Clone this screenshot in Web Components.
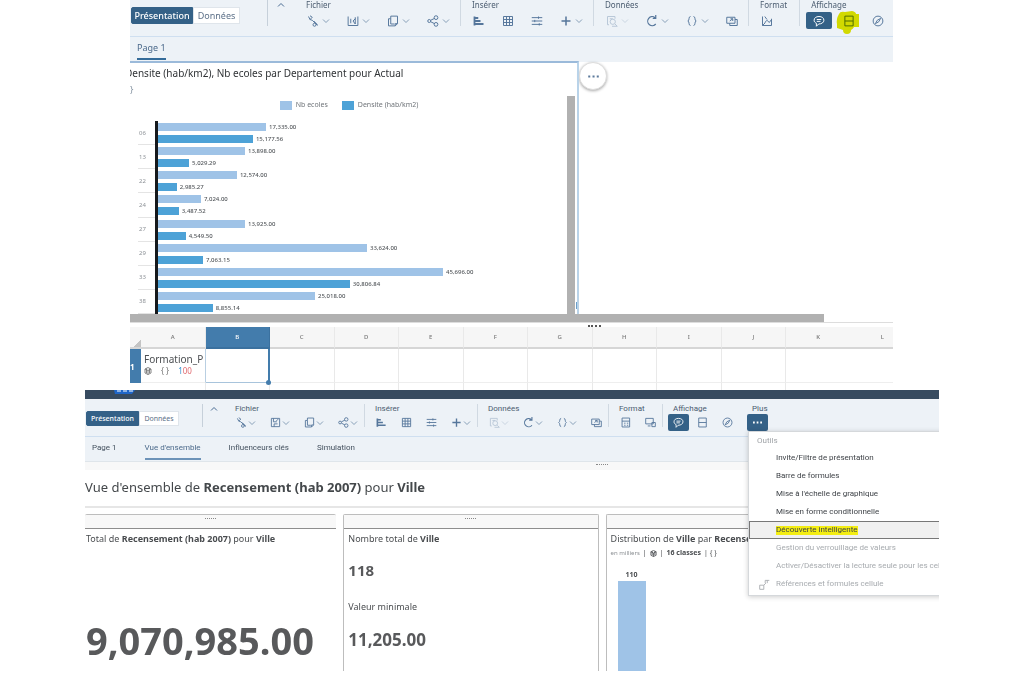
<!DOCTYPE html>
<html lang="fr">
<head>
<meta charset="utf-8">
<title>Vue d'ensemble</title>
<style>
  body { margin: 0; background: #fff; font-family: "Noto Sans", "Open Sans", sans-serif; color: #4a4d50; }
  main { display: block; }
</style>
</head>
<body>
<main>
  <sheet-view></sheet-view>
  <discovery-view></discovery-view>
</main>
<script>
const define = (name, render) => {
  customElements.define(name, class extends HTMLElement {
    connectedCallback() {
      if (this.shadowRoot) return;
      this.attachShadow({ mode: "open" }).innerHTML = render(this);
    }
  });
};

/* Icon set, drawn on a 16 x 16 grid */
const ICONS = {
  wrench: '<path d="M2 2l2 4 3 1 7 7M4 6l3-3-3-2M8 13a2 2 0 1 0 4 0 2 2 0 1 0-4 0M9 8l5 5"/>',
  save: '<path d="M1.500 2v12h13V2M5 5v6M8 8l3-3M8 8l3 4M11 3v9"/>',
  saveas: '<path d="M2 2h12v12H2zM5 2v5h5M9 6l3-3M6 14v-4h5"/>',
  copy: '<path d="M5 1.500h9v10l-3 3H2V5h3zM5 5v7h5M14 11.500h-3v3"/>',
  share: '<circle cx="3" cy="8" r="2"/><circle cx="12" cy="3.500" r="2.500"/><circle cx="12" cy="12.500" r="2.500"/><path d="M5 7l5-2.500M5 9l5 2.500"/>',
  chart: '<path d="M2 2v12M2 4h5M2 8h8M2 12h12" stroke-width="2.400"/>',
  table: '<path d="M2 2h12v12H2zM2 6h12M2 10h12M6 2v12M10 2v12"/>',
  sliders: '<path d="M1 3.500h14M1 8h14M1 12.500h14M10 2v3M5 6.500v3M11 11v3"/>',
  plus: '<path d="M8 2v12M2 8h12" stroke-width="2"/>',
  find: '<path d="M4 13H2V2h10v3M5 5h4"/><circle cx="9" cy="9" r="3.500"/><path d="M12 12l3 3H8"/>',
  refresh: '<path d="M13 12A6 6 0 1 1 12 3.500M13 0v4.500H9" stroke-width="1.600"/>',
  braces: '<path d="M6 2C3 2 5 7 2.500 8 5 9 3 14 6 14M10 2c3 0 1 5 3.500 6C11 9 13 14 10 14"/>',
  layers: '<path d="M1 3h11v8H1zM12 6h3v8H5v-3M5 8l4-3M9 8V5H6"/>',
  format: '<path d="M2 2v12h12V5M5 10l3-3 3 3 3-4M5 2l3 4M2 14l4-4"/>',
  calc: '<path d="M3 1.500h11v13H3zM3 6h11M6 9h2M10 9h2M6 12h2M10 12h2"/>',
  device: '<path d="M1 2h11v8H1zM4 13h4M10 8h5v6h-5z"/>',
  comment: '<path d="M8 2C4 2 1.500 4 1.500 7c0 2 1 3 3 4v4l3-3c4 0 7-2 7-5S12 2 8 2zM5 6h6M5 8.500h5"/>',
  rows: '<path d="M2.500 1.500h11v13h-11zM2.500 8h11"/>',
  compass: '<circle cx="8" cy="8" r="6.500"/><path d="M11.500 4.500L9 9l-4.500 2.500L7 7z"/>',
  dots: '<path d="M1.500 8h2.500M6.800 8h2.500M12 8h2.500" stroke-width="2.600"/>',
  down: '<path d="M2 5l6 6 6-6" stroke-width="1.800"/>',
  up: '<path d="M2 11l6-6 6 6" stroke-width="2"/>',
  cube: '<path d="M8 1l6 3v8l-6 3-6-3V4zM2 4l6 3 6-3M8 7v8M5 3v9M11 3v9" stroke-width="1.800"/>',
  link: '<path d="M1 9h6v6H1zM7 9l3-3M9 6V2h6M12 2v4"/>'
};
define("ui-icon", el => `
  <style>
    :host { display: block; flex: none; width: var(--icon, 11px); height: var(--icon, 11px); }
    svg { display: block; width: 100%; height: 100%; fill: none; stroke: currentColor; stroke-width: 1.300; }
  </style>
  <svg viewBox="0 0 16 16" aria-hidden="true">${ICONS[el.getAttribute("name")]}</svg>`);

define("tool-button", el => `
  <style>
    :host { display: flex; flex: none; }
    :host([dim]) { opacity: .35; }
    button { display: flex; align-items: center; gap: var(--chev-gap, 3px); border: 0; padding: 0 1px; background: none; color: #55769b; height: 17px; }
    ui-icon.down { --icon: 8px; color: #7d96b0; }
    :host([active]) button { background: #346187; color: #fff; border-radius: 2px; padding: 0 var(--active-pad, 7px); }
    :host([active]) { margin: 0 -5px; }
    :host([marked]) { position: relative; }
    svg { position: absolute; left: -6px; top: -1px; width: 26px; height: 24px; mix-blend-mode: multiply; }
  </style>
  <button type="button" aria-label="${el.getAttribute("label") || el.getAttribute("icon")}">
    <ui-icon name="${el.getAttribute("icon")}"></ui-icon>
    ${el.hasAttribute("menu") ? '<ui-icon class="down" name="down"></ui-icon>' : ""}
  </button>
  ${el.hasAttribute("marked") ? '<svg viewBox="0 0 26 24" aria-hidden="true"><path d="M3 3Q4 0 9 1l7-1q4 1 4 3h3v13h-5q-1 2-3 3 0 4-4 4t-4-4L1 17V13Q0 8 3 3z" fill="#e2e500"/></svg>' : ""}`);

define("tool-group", el => `
  <style>
    :host { display: flex; flex-direction: column; flex: none; position: relative; box-sizing: border-box;
            padding: 0 var(--g-right, 9px) 0 var(--g-left, 11px); border-left: 1px solid #d0d9e2; height: var(--g-h, 26px); }
    :host([plain]) { border-left-color: transparent; }
    .label { font-family: var(--label-face, inherit); font-size: 8px; line-height: 10px; color: #4b5c70; white-space: nowrap; }
    .items { display: flex; align-items: center; gap: var(--tool-gap, 15px); height: 17px; margin-top: var(--items-top, 2px); }
  </style>
  <span class="label">${el.getAttribute("label")}</span>
  <div class="items"><slot></slot></div>
  <slot name="menu"></slot>`);

define("mode-switch", () => `
  <style>
    :host { display: flex; flex: none; }
    button { font: inherit; font-size: var(--mode-font, 9px); border: 1px solid #dfe5eb; background: #fff; color: #5c7088; padding: 0; height: var(--mode-h, 17px); width: var(--mode-b, 47px); white-space: nowrap; display: flex; align-items: center; justify-content: center; }
    button[aria-pressed=true] { background: #346187; border-color: #346187; color: #fff; width: var(--mode-a, 62px); border-radius: 2px 0 0 2px; font-weight: 500; }
  </style>
  <button type="button" aria-pressed="true">Présentation</button>
  <button type="button" aria-pressed="false">Données</button>`);

define("tool-bar", () => `
  <style>
    :host { display: flex; align-items: flex-start; box-sizing: border-box; background: #edf2f7; border-bottom: 1px solid #cfdff0; }
    .mode { padding: var(--mode-top, 7px) var(--mode-gap, 27px) 0 1px; }
    .fold { border-left: 1px solid #c6d0da; width: var(--fold-w, 27px); height: var(--g-h, 26px); display: flex; justify-content: center; flex: none; box-sizing: border-box; }
    .fold button { border: 0; padding: 0; background: none; color: #4a6c93; height: 10px; --icon: 8px; }
  </style>
  <div class="mode"><mode-switch></mode-switch></div>
  <div class="fold"><button type="button" aria-label="Réduire"><ui-icon name="up"></ui-icon></button></div>
  <slot></slot>`);

define("tab-strip", el => {
  const current = +el.getAttribute("current");
  return `
  <style>
    :host { display: flex; box-sizing: border-box; background: #edf2f7; gap: 28px; padding-left: var(--tab-left, 7px); }
    a { font-family: var(--label-face, inherit); font-size: var(--tab-font, 8px); color: #44515f; text-decoration: none; line-height: 21px; height: 21px; white-space: nowrap; }
    a[aria-current] { color: #4c6a8b; border-bottom: 2px solid var(--tab-line, #6d93b8); }
  </style>
  ${el.getAttribute("tabs").split("|").map((t, i) => `<a href="#tab${i}" ${i === current ? 'aria-current="page"' : ""}>${t}</a>`).join("")}`;
});

define("bar-chart", () => {
  const unit = 409;
  const data = [
    ["06", 108, "17,335.00", 95, "15,177.56"], ["13", 87, "13,898.00", 31, "5,029.29"],
    ["22", 79, "12,574.00", 19, "2,985.27"], ["24", 43, "7,024.00", 21, "3,487.52"],
    ["27", 87, "13,925.00", 28, "4,549.50"], ["29", 209, "33,624.00", 45, "7,063.15"],
    ["33", 285, "45,696.00", 192, "30,806.84"], ["38", 157, "25,018.00", 55, "8,855.14"]];
  const bar = (cls, w, v) => `<div class="bar"><i class="${cls}" style="width:${(w / unit * 100).toFixed(1)}%"></i><span>${v}</span></div>`;
  return `
  <style>
    :host { display: flex; flex-direction: column; position: relative; box-sizing: border-box; overflow: hidden;
            border-top: 2px solid #9bbada; border-right: 2px solid #b9d3e9; height: 253px; }
    header { white-space: nowrap; line-height: 17px; padding-top: 2px; }
    header h2 { margin: 0 0 0 -5px; font: inherit; font-size: 10px; color: #303336; }
    header p { margin: 0; font-size: 9px; line-height: 15px; color: #8795a3; }
    .legend { display: flex; justify-content: center; gap: 14px; font-size: 7px; line-height: 14px; color: #70757a; padding-right: 9px; margin-top: 1px; }
    .legend span { display: flex; align-items: center; gap: 4px; }
    .legend i { width: 12px; height: 9px; }
    .light { background: #9fc3e7; } .dark { background: #4da2d7; }
    .plot { flex: 1; margin-top: 9px; display: grid; grid-auto-rows: 1fr; padding-right: 10px; }
    .row { display: grid; grid-template-columns: 8px 17px 1fr; }
    .cat { grid-column: 2; display: flex; align-items: center; justify-content: center; padding-right: 8px; font-size: 6px; color: #8d9297; border-bottom: 1px solid #e4e4e4; }
    .bars { border-left: 3px solid #16191c; display: flex; flex-direction: column; justify-content: space-around; }
    .bar { display: flex; align-items: center; height: 8px; }
    .bar i { height: 8px; flex: none; }
    .bar span { font-size: 6px; line-height: 8px; font-weight: 500; color: #54585c; padding-left: 3px; }
    .scroll { position: absolute; right: 2px; top: 33px; bottom: 0; width: 8px; background: #b1b1b1; }
    .thumb { position: absolute; right: -2px; bottom: 5px; width: 3px; height: 7px; background: #6c9fca; }
  </style>
  <header><h2>Densite (hab/km2), Nb ecoles par Departement pour Actual</h2><p>}</p></header>
  <div class="legend"><span><i class="light"></i>Nb ecoles</span><span><i class="dark"></i>Densite (hab/km2)</span></div>
  <div class="plot">${data.map(d => `<div class="row"><div class="cat">${d[0]}</div><div class="bars">${bar("light", d[1], d[2])}${bar("dark", d[3], d[4])}</div></div>`).join("")}</div>
  <div class="scroll"></div><div class="thumb"></div>`;
});

define("data-grid", () => {
  const cols = [..."ABCDEFGHIJKL"];
  return `
  <style>
    :host { display: block; overflow: hidden; height: 63px; }
    table { border-collapse: separate; border-spacing: 0; table-layout: fixed; width: calc(100% + 22px); }
    .rowhead { width: 11px; }
    th, td { padding: 0; box-sizing: border-box; border-right: 1px solid #e9e9e9; overflow: hidden; }
    thead th { height: 22px; background: #f6f6f6; font-size: 6px; font-weight: 500; color: #777; border-bottom: 2px solid #d6d6d6; }
    thead th.corner { background: linear-gradient(135deg, #f6f6f6 75%, #c4c4c4 75%); border-right: 0; }
    thead th.sel { background: #437cac; color: #fff; border-color: #3b719f; }
    thead th:nth-child(12), td:nth-child(12) { border-right: 0; }
    tbody th { background: #437cac; color: #fff; font-size: 8px; text-align: left; border: 0; }
    td { border-bottom: 1px solid #eee; vertical-align: top; height: 34px; }
    td.a { border-right-color: #b9cfe2; padding: 4px 0 0 3px; white-space: nowrap; font-size: 10px; line-height: 12px; color: #4c4f52; }
    td.sel { border-right: 2px solid #437cac; border-bottom-color: #a8c4dc; position: relative; overflow: visible; }
    td.sel::after { content: ""; position: absolute; right: -3px; bottom: -3px; width: 5px; height: 5px; border-radius: 50%; background: #437cac; }
    .meta { display: flex; align-items: center; gap: 9px; --icon: 8px; font-size: 8px; color: #777; }
    b { font-weight: 400; color: #3a93d0; } em { font-style: normal; color: #e06a70; }
    tr.next td, tr.next th { height: 8px; background: #fff; border-bottom: 0; }
  </style>
  <table>
    <thead><tr><th class="rowhead corner"></th>${cols.map(c => `<th scope="col" class="${c === "B" ? "sel" : ""}">${c}</th>`).join("")}</tr></thead>
    <tbody>
      <tr><th scope="row">1</th>${cols.map(c => c === "A"
        ? '<td class="a">Formation_P<div class="meta"><ui-icon name="cube"></ui-icon><span>{ }</span><span><b>1</b><em>00</em></span></div></td>'
        : `<td class="${c === "B" ? "sel" : ""}"></td>`).join("")}</tr>
      <tr class="next"><th></th>${cols.map(() => "<td></td>").join("")}</tr>
    </tbody>
  </table>`;
});

define("sheet-view", () => `
  <style>
    :host { display: block; margin: 0 131px 0 130px; }
    tool-bar { height: 37px; overflow: hidden; --icon: 12px; }
    .wide { --g-right: 12px; }
    tab-strip { height: 25px; --tab-font: 9px; --tab-line: #346b99; }
    .canvas { display: grid; grid-template-columns: 449px 1fr; margin-top: -1px; }
    .more { width: 28px; height: 28px; margin: 1px 0 0; padding: 0; border: 1px solid #ddd; border-radius: 50%; background: #fff; color: #5c7a9c; box-shadow: 0 1px 3px #0005; display: flex; align-items: center; justify-content: center; --icon: 13px; }
    .hscroll { height: 8px; width: 91%; background: #b1b1b1; }
    .split { border-top: 1px solid #ddd; height: 4px; display: flex; justify-content: center; padding-left: 166px; }
    .split::before { content: ""; width: 13px; border-top: 2px dotted #555; margin-top: 2px; }
  </style>
  <tool-bar>
    <tool-group label="Fichier" plain>
      <tool-button icon="wrench" menu></tool-button><tool-button icon="save" menu></tool-button>
      <tool-button icon="copy" menu></tool-button><tool-button icon="share" menu></tool-button>
    </tool-group>
    <tool-group label="Insérer">
      <tool-button icon="chart"></tool-button><tool-button icon="table"></tool-button>
      <tool-button icon="sliders"></tool-button><tool-button icon="plus" menu></tool-button>
    </tool-group>
    <tool-group label="Données">
      <tool-button icon="find" menu dim></tool-button><tool-button icon="refresh" menu></tool-button>
      <tool-button icon="braces" menu></tool-button><tool-button icon="layers"></tool-button>
    </tool-group>
    <tool-group label="Format" class="wide"><tool-button icon="format"></tool-button></tool-group>
    <tool-group label="Affichage">
      <tool-button icon="comment" active></tool-button><tool-button icon="rows" marked></tool-button><tool-button icon="compass"></tool-button>
    </tool-group>
  </tool-bar>
  <tab-strip tabs="Page 1" current="0"></tab-strip>
  <div class="canvas"><bar-chart></bar-chart><button class="more" type="button" aria-label="Plus d'actions"><ui-icon name="dots"></ui-icon></button></div>
  <div class="hscroll"></div>
  <div class="split"></div>
  <data-grid></data-grid>`);

define("tools-menu", () => `
  <style>
    :host { display: block; position: absolute; top: 27px; left: 8px; width: 216px; box-sizing: border-box; background: #fff;
            border: 1px solid #d5d8db; box-shadow: 0 1px 5px #0003; padding-bottom: 2px; font-family: Roboto, sans-serif; }
    h3 { margin: 0; padding-left: 8px; font-size: 8px; font-weight: 400; line-height: 17px; color: #a0a4a8; }
    ul { list-style: none; margin: 0; padding: 0; }
    button { font: inherit; font-size: 8px; line-height: 16px; width: 100%; box-sizing: border-box; display: flex; align-items: center; border: 1px solid transparent; background: none; padding: 0 0 0 9px; color: #3f4348; white-space: nowrap; text-align: left; --icon: 11px; }
    button::before { content: ""; width: 17px; flex: none; }
    button.icon::before { content: none; }
    button.icon ui-icon { margin-right: 6px; }
    button:disabled { color: #a7abaf; }
    button.on { background: #f0f0f0; border: 1px solid #777; }
    mark { background: linear-gradient(#f4ee12, #f4ee12) 0 4px / 100% 9px no-repeat; color: inherit; }
  </style>
  <h3>Outils</h3>
  <ul>
    <li><button type="button">Invite/Filtre de présentation</button></li>
    <li><button type="button">Barre de formules</button></li>
    <li><button type="button">Mise à l'échelle de graphique</button></li>
    <li><button type="button">Mise en forme conditionnelle</button></li>
    <li><button type="button" class="on"><mark>Découverte intelligente</mark></button></li>
    <li><button type="button" disabled>Gestion du verrouillage de valeurs</button></li>
    <li><button type="button" disabled>Activer/Désactiver la lecture seule pour les cell</button></li>
    <li><button type="button" class="icon" disabled><ui-icon name="link"></ui-icon>Références et formules cellule</button></li>
  </ul>`);

define("tile-card", () => `
  <style>
    :host { display: block; box-sizing: border-box; height: 157px; border: solid #bdbdbd; border-width: 1px 1px 0; border-radius: 2px 2px 0 0; overflow: hidden; min-width: 0; }
    :host([flush]) { border-left: 0; border-right: 0; }
    :host([open]) { border-right: 0; }
    .grip { height: 13px; background: #f8f8f8; border-bottom: 1px solid #8e8e8e; display: flex; justify-content: center; }
    .grip::before { content: ""; width: 11px; border-top: 1px dotted #888; margin-top: 3px; }
    .body { padding: 3px 0 0 4px; }
    :host([flush]) .body { padding-left: 1px; }
  </style>
  <div class="grip"></div><div class="body"><slot></slot></div>`);

define("discovery-view", () => `
  <style>
    :host { display: block; margin: 0 85px; overflow: hidden; --g-h: 23px; --g-left: 10px; --g-right: 5px; --tool-gap: 12px; --chev-gap: 1px; --active-pad: 5px;
      --mode-font: 7px; --mode-h: 15px; --mode-a: 53px; --mode-b: 40px; --mode-gap: 23px; --mode-top: 7px; --fold-w: 22px; --items-top: 0px; --label-face: Roboto, sans-serif; }
    .shell { height: 9px; background: #374b60; display: flex; padding-left: 29px; }
    .shell svg { display: block; width: 24px; height: 4px; }
    tool-bar { height: 38px; padding-top: 5px; position: relative; z-index: 2; --icon: 11px; }
    .extra { --g-left: 12px; }
    tab-strip { height: 25px; --tab-font: 8px; border-bottom: 1px solid #dfe5ea; }
    .grip { height: 8px; background: #f8f8f8; display: flex; justify-content: center; padding-left: 180px; }
    .grip::before { content: ""; width: 12px; border-top: 1px dotted #888; margin-top: 2px; }
    h1 { margin: 0; font-size: 13px; line-height: 20px; font-weight: 400; padding: 7px 0 9px; border-bottom: 2px solid #e6e6e6; white-space: nowrap; color: #44484b; }
    .tiles { display: grid; grid-template-columns: 251fr 255fr 333fr; gap: 7px; margin-top: 6px; }
    p { margin: 0; font-size: 9px; line-height: 14px; white-space: nowrap; }
    strong.big { display: block; font-size: 38px; line-height: 50px; margin-top: 69px; color: #58595b; }
    strong.n { display: block; font-size: 15px; line-height: 24px; color: #58595b; }
    .n118 { margin: 12px 0; padding-bottom: 6px; }
    strong.nmin { margin-top: 14px; font-size: 17px; }
    .sub { display: flex; align-items: center; gap: 3px; font-size: 7px; --icon: 7px; }
    .sub small { font-size: 6px; color: #8a8e92; }
    .col { width: 28px; margin: 9px 0 0 7px; text-align: center; font-size: 7px; line-height: 12px; font-weight: 700; }
    .col i { display: block; height: 100px; background: #9fc3e7; }
  </style>
  <div class="shell"><svg viewBox="0 0 24 4" aria-hidden="true"><path d="M0 0h21l-3 4H1z" fill="#1f66c8"/><path d="M3 1h4M9 1h4M15 1h4" stroke="#fff"/></svg></div>
  <tool-bar>
    <tool-group label="Fichier" plain>
      <tool-button icon="wrench" menu></tool-button><tool-button icon="saveas" menu></tool-button>
      <tool-button icon="copy" menu></tool-button><tool-button icon="share" menu></tool-button>
    </tool-group>
    <tool-group label="Insérer">
      <tool-button icon="chart"></tool-button><tool-button icon="table"></tool-button>
      <tool-button icon="sliders"></tool-button><tool-button icon="plus" menu></tool-button>
    </tool-group>
    <tool-group label="Données">
      <tool-button icon="find" menu dim></tool-button><tool-button icon="refresh" menu></tool-button>
      <tool-button icon="braces" menu></tool-button><tool-button icon="layers"></tool-button>
    </tool-group>
    <tool-group label="Format"><tool-button icon="calc"></tool-button><tool-button icon="device"></tool-button></tool-group>
    <tool-group label="Affichage">
      <tool-button icon="comment" active></tool-button><tool-button icon="rows"></tool-button><tool-button icon="compass"></tool-button>
    </tool-group>
    <tool-group label="Plus" plain class="extra"><tool-button icon="dots" active></tool-button><tools-menu slot="menu"></tools-menu></tool-group>
  </tool-bar>
  <tab-strip tabs="Page 1|Vue d'ensemble|Influenceurs clés|Simulation" current="1"></tab-strip>
  <div class="grip"></div>
  <h1>Vue d'ensemble de <b>Recensement (hab 2007)</b> pour <b>Ville</b></h1>
  <div class="tiles">
    <tile-card flush>
      <p>Total de <b>Recensement (hab 2007)</b> pour <b>Ville</b></p>
      <strong class="big">9,070,985.00</strong>
    </tile-card>
    <tile-card>
      <p>Nombre total de <b>Ville</b></p>
      <strong class="n n118">118</strong>
      <p>Valeur minimale</p>
      <strong class="n nmin">11,205.00</strong>
    </tile-card>
    <tile-card open>
      <p>Distribution de <b>Ville</b> par <b>Recensement</b></p>
      <p class="sub"><small>en milliers</small> | <ui-icon name="cube"></ui-icon> | <b>16 classes</b> | { }</p>
      <div class="col">110<i></i></div>
    </tile-card>
  </div>`);
</script>
</body>
</html>
